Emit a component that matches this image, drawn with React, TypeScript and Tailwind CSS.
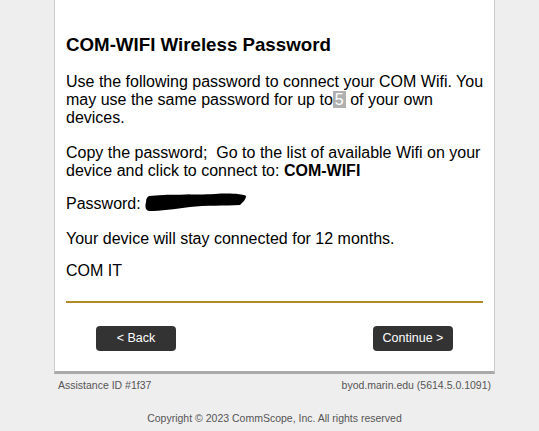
import React from 'react';

function Redaction() {
  return (
    <svg width="102" height="20" viewBox="0 0 102 20" className="inline-block align-middle -mt-[3px]">
      <path
        d="M4 3 C20 1 50 2 70 1 C85 0 98 1 101 3 C101 7 97 10 95 12 C80 13 60 12 45 14 C30 16 15 18 4 18 C0 17 0 13 1 9 C1 6 2 4 4 3 Z"
        fill="#000"
      />
    </svg>
  );
}

export default function App() {
  return (
    <div className="min-h-[431px] bg-[#eeeeee] font-['Liberation_Sans',Arial,sans-serif]">
      <div className="w-[441px] ml-[54px]">
        {/* Card */}
        <div className="bg-white border-x border-[#cccccc] border-b-[3px] border-b-[#aaaaaa] pl-[11px] pr-[6px] pt-[34px] pb-[20px]">
          <h2 className="text-[18.72px] font-bold leading-[21px] text-black mb-[18px]">
            COM-WIFI Wireless Password
          </h2>
          <div className="text-[16px] leading-[18px] text-black">
            <p className="mb-[17px]">
              Use the following password to connect your COM Wifi. You may use the same password for up to
              <span className="bg-[#b0b0b0] text-white px-[2px]">5</span> of your own devices.
            </p>
            <p className="mb-[15px]">
              Copy the password;&nbsp; Go to the list of available Wifi on your device and click to connect to:{' '}
              <b>COM-WIFI</b>
            </p>
            <p className="mb-[17px]">
              Password: <Redaction />
            </p>
            <p className="mb-[14px]">Your device will stay connected for 12 months.</p>
            <p>COM IT</p>
          </div>
          <div className="mt-[21px] mr-[5px] h-[2px] bg-[#b08a2a]" />
          <div className="flex justify-between pl-[30px] pr-[35px] mt-[23px]">
            <button className="w-[80px] h-[25px] rounded-[4px] bg-[#333333] text-white text-[12.5px]">
              &lt; Back
            </button>
            <button className="w-[80px] h-[25px] rounded-[4px] bg-[#333333] text-white text-[12.5px]">
              Continue &gt;
            </button>
          </div>
        </div>
        {/* Footer */}
        <div className="flex justify-between px-[4px] pt-[4px] text-[10.5px] text-[#555555] font-['Liberation_Sans',Tahoma,sans-serif]">
          <span>Assistance ID #1f37</span>
          <span>byod.marin.edu (5614.5.0.1091)</span>
        </div>
        <div className="text-center mt-[17px] text-[10.5px] text-[#555555] font-['Liberation_Sans',Tahoma,sans-serif]">
          Copyright © 2023 CommScope, Inc. All rights reserved
        </div>
      </div>
    </div>
  );
}
